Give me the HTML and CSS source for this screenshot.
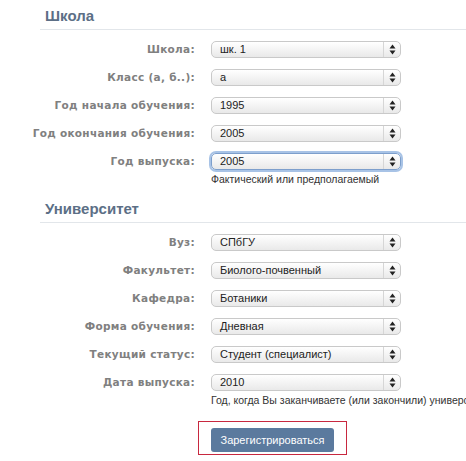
FILE: index.html
```html
<!DOCTYPE html>
<html lang="ru">
  <head>
    <meta charset="UTF-8" />
    <meta name="viewport" content="width=device-width, initial-scale=1.0" />
    <title>Регистрация</title>
    <link rel="stylesheet" href="styles.css">
  </head>
  <body>
    <div class="page">
      <h2 class="section-title">Школа</h2>
      <div class="form-row">
        <label>Школа:</label>
        <div class="select"><span class="value">шк. 1</span><span class="arrows"><svg width="7" height="11" viewBox="0 0 7 11"><path d="M3.5 0.5L6.5 4.5H0.5Z M3.5 10.5L6.5 6.5H0.5Z" fill="#222"/></svg></span></div>
      </div>
      <div class="form-row">
        <label>Класс (а, б..):</label>
        <div class="select"><span class="value">а</span><span class="arrows"><svg width="7" height="11" viewBox="0 0 7 11"><path d="M3.5 0.5L6.5 4.5H0.5Z M3.5 10.5L6.5 6.5H0.5Z" fill="#222"/></svg></span></div>
      </div>
      <div class="form-row">
        <label>Год начала обучения:</label>
        <div class="select"><span class="value">1995</span><span class="arrows"><svg width="7" height="11" viewBox="0 0 7 11"><path d="M3.5 0.5L6.5 4.5H0.5Z M3.5 10.5L6.5 6.5H0.5Z" fill="#222"/></svg></span></div>
      </div>
      <div class="form-row">
        <label>Год окончания обучения:</label>
        <div class="select"><span class="value">2005</span><span class="arrows"><svg width="7" height="11" viewBox="0 0 7 11"><path d="M3.5 0.5L6.5 4.5H0.5Z M3.5 10.5L6.5 6.5H0.5Z" fill="#222"/></svg></span></div>
      </div>
      <div class="form-row">
        <label>Год выпуска:</label>
        <div class="select focused"><span class="value">2005</span><span class="arrows"><svg width="7" height="11" viewBox="0 0 7 11"><path d="M3.5 0.5L6.5 4.5H0.5Z M3.5 10.5L6.5 6.5H0.5Z" fill="#222"/></svg></span></div>
      </div>
      <div class="hint">Фактический или предполагаемый</div>

      <h2 class="section-title">Университет</h2>
      <div class="form-row">
        <label>Вуз:</label>
        <div class="select"><span class="value">СПбГУ</span><span class="arrows"><svg width="7" height="11" viewBox="0 0 7 11"><path d="M3.5 0.5L6.5 4.5H0.5Z M3.5 10.5L6.5 6.5H0.5Z" fill="#222"/></svg></span></div>
      </div>
      <div class="form-row">
        <label>Факультет:</label>
        <div class="select"><span class="value">Биолого-почвенный</span><span class="arrows"><svg width="7" height="11" viewBox="0 0 7 11"><path d="M3.5 0.5L6.5 4.5H0.5Z M3.5 10.5L6.5 6.5H0.5Z" fill="#222"/></svg></span></div>
      </div>
      <div class="form-row">
        <label>Кафедра:</label>
        <div class="select"><span class="value">Ботаники</span><span class="arrows"><svg width="7" height="11" viewBox="0 0 7 11"><path d="M3.5 0.5L6.5 4.5H0.5Z M3.5 10.5L6.5 6.5H0.5Z" fill="#222"/></svg></span></div>
      </div>
      <div class="form-row">
        <label>Форма обучения:</label>
        <div class="select"><span class="value">Дневная</span><span class="arrows"><svg width="7" height="11" viewBox="0 0 7 11"><path d="M3.5 0.5L6.5 4.5H0.5Z M3.5 10.5L6.5 6.5H0.5Z" fill="#222"/></svg></span></div>
      </div>
      <div class="form-row">
        <label>Текущий статус:</label>
        <div class="select"><span class="value">Студент (специалист)</span><span class="arrows"><svg width="7" height="11" viewBox="0 0 7 11"><path d="M3.5 0.5L6.5 4.5H0.5Z M3.5 10.5L6.5 6.5H0.5Z" fill="#222"/></svg></span></div>
      </div>
      <div class="form-row">
        <label>Дата выпуска:</label>
        <div class="select"><span class="value">2010</span><span class="arrows"><svg width="7" height="11" viewBox="0 0 7 11"><path d="M3.5 0.5L6.5 4.5H0.5Z M3.5 10.5L6.5 6.5H0.5Z" fill="#222"/></svg></span></div>
      </div>
      <div class="hint">Год, когда Вы заканчиваете (или закончили) университет</div>

      <div class="submit-box">
        <button class="button">Зарегистрироваться</button>
      </div>
    </div>
  </body>
</html>
```

FILE: styles.css
```css
body {
  margin: 0;
  padding: 0;
  background: #fff;
  font-family: "DejaVu Sans", Verdana, sans-serif;
  overflow: hidden;
}
* {
  box-sizing: border-box;
}
.page {
  width: 466px;
  padding-top: 7px;
}
.section-title {
  margin: 0 0 5px 40px;
  padding: 0 0 4px 5px;
  font-family: "Liberation Sans", Arial, sans-serif;
  font-size: 15px;
  line-height: 18px;
  font-weight: bold;
  color: #5c6f86;
  border-bottom: 1px solid #e2e6ea;
}
.form-row {
  display: grid;
  grid-template-columns: 195px 190px;
  column-gap: 16px;
  align-items: center;
  height: 28px;
}
.form-row label {
  text-align: right;
  font-size: 10.5px;
  font-weight: bold;
  letter-spacing: 0.3px;
  color: #808080;
  white-space: nowrap;
}
.select {
  display: flex;
  align-items: stretch;
  height: 17px;
  border: 1px solid #c9c9c9;
  border-radius: 5px;
  background: linear-gradient(#ffffff, #e9e9e9);
  font-family: "Liberation Sans", Arial, sans-serif;
  font-size: 11px;
  color: #222;
}
.select .value {
  flex: 1;
  padding-left: 8px;
  line-height: 15px;
}
.select .arrows {
  width: 17px;
  display: flex;
  align-items: center;
  justify-content: center;
  border-left: 1px solid #d6d6d6;
}
.select.focused {
  border-color: #7d9fcc;
  box-shadow: 0 0 0 2px #a8c3e6;
}
.hint {
  margin: -2px 0 15px 211px;
  font-family: "Liberation Sans", Arial, sans-serif;
  font-size: 10.5px;
  line-height: 12px;
  color: #333;
  white-space: nowrap;
}
.submit-box {
  display: inline-block;
  margin: 0 0 0 198px;
  padding: 6px 12px 2px 12px;
  border: 1px solid #c8283f;
}
.button {
  display: block;
  width: 123px;
  height: 24px;
  padding: 0;
  background: #5b7a9e;
  color: #fff;
  border: none;
  border-radius: 3px;
  font-family: "Liberation Sans", Arial, sans-serif;
  font-size: 11px;
  cursor: pointer;
}
.button:hover {
  background: #4d6b8f;
}
```
